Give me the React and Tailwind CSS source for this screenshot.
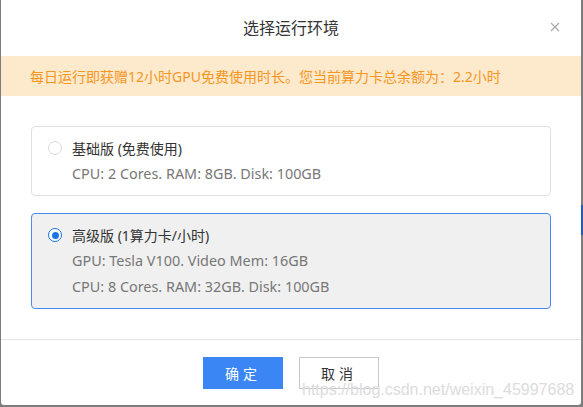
import React, { useState } from 'react';

const plans = [
  {
    id: 'basic',
    title: '基础版 (免费使用)',
    lines: ['CPU: 2 Cores. RAM: 8GB. Disk: 100GB'],
  },
  {
    id: 'pro',
    title: '高级版 (1算力卡/小时)',
    lines: ['GPU: Tesla V100. Video Mem: 16GB', 'CPU: 8 Cores. RAM: 32GB. Disk: 100GB'],
  },
];

const Radio = ({ checked }) => (
  <span
    className={`flex h-[14px] w-[14px] shrink-0 items-center justify-center rounded-full ${
      checked ? 'border-[1.5px] border-[#1a73e8] bg-white' : 'border border-[#dadada] bg-white'
    }`}
  >
    {checked && <span className="h-[7px] w-[7px] rounded-full bg-[#1a73e8]" />}
  </span>
);

const App = () => {
  const [selected, setSelected] = useState('pro');

  return (
    <div
      className="relative h-[407px] w-[583px] overflow-hidden bg-[#7d7d7d]"
      style={{ fontFamily: '"Noto Sans", "Noto Sans CJK SC", sans-serif' }}
    >
      {/* bits of the page behind */}
      <div className="absolute right-0 top-[205px] h-[30px] w-[2px] bg-[#1f5fae]" />

      {/* Dialog */}
      <div className="ml-px mr-[2px] flex h-[405px] flex-col rounded-b-[3px] bg-white">
        {/* Header */}
        <div className="relative flex h-[56px] items-center justify-center">
          <span className="text-[16px] text-[#333]">选择运行环境</span>
          <button className="absolute right-[21px] top-[22px]">
            <svg width="10" height="10" viewBox="0 0 10 10">
              <path d="M1 1 L9 9 M9 1 L1 9" stroke="#a8a8a8" strokeWidth="1.1" />
            </svg>
          </button>
        </div>

        {/* Notice */}
        <div className="flex h-[40px] items-center bg-[#fde9cc] pl-[29px] text-[14px] text-[#f5961f]">
          每日运行即获赠12小时GPU免费使用时长。您当前算力卡总余额为：2.2小时
        </div>

        {/* Options */}
        <div className="flex flex-col gap-[17px] px-[30px] pt-[30px]">
          {plans.map((p) => {
            const active = selected === p.id;
            return (
              <div
                key={p.id}
                onClick={() => setSelected(p.id)}
                className={`cursor-pointer rounded-[4px] border py-[8px] pl-[16px] ${
                  active ? 'border-[#4a8af4] bg-[#f0f0f0]' : 'border-[#e0e0e0] bg-white'
                }`}
              >
                <div className="flex h-[26px] items-center gap-[10px]">
                  <Radio checked={active} />
                  <span className="text-[14px] text-[#333]">{p.title}</span>
                </div>
                {p.lines.map((l) => (
                  <div key={l} className="flex h-[26px] items-center pl-[24px] text-[14.4px] text-[#777]">
                    {l}
                  </div>
                ))}
              </div>
            );
          })}
        </div>

        {/* Footer */}
        <div className="mt-[30px] flex justify-center gap-[16px] border-t border-[#e6e6e6] pt-[17px]">
          <button className="h-[32px] w-[80px] bg-[#3a86f5] text-[14px] tracking-[4px] text-white">
            确定
          </button>
          <button className="h-[32px] w-[80px] border border-[#c8c8c8] bg-white text-[14px] tracking-[4px] text-[#333]">
            取消
          </button>
        </div>
      </div>

      {/* watermark */}
      <div
        className="pointer-events-none absolute left-[302px] top-[378px] text-[16px] text-[#dcdcdc]"
        style={{ fontFamily: '"Liberation Sans", sans-serif' }}
      >
        https://blog.csdn.net/weixin_45997688
      </div>
    </div>
  );
};

export default App;
